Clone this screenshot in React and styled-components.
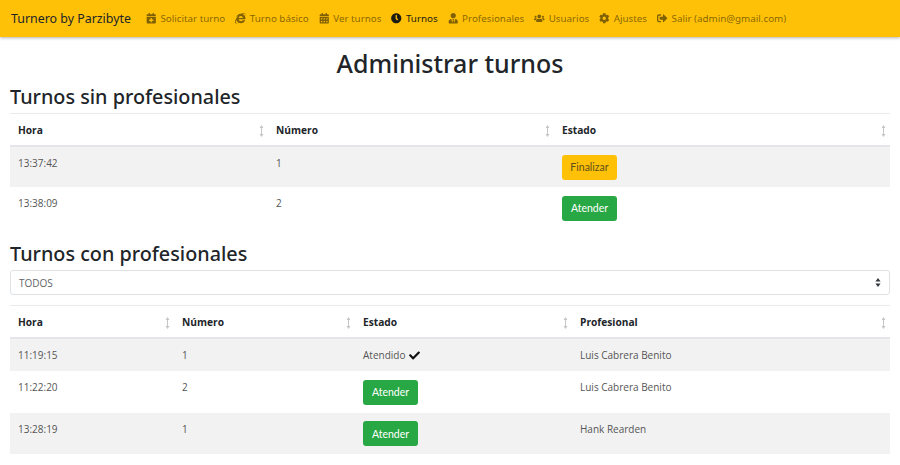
import React from "react";
import styled, { createGlobalStyle } from "styled-components";
import {
  FaCalendarPlus,
  FaInternetExplorer,
  FaCalendarAlt,
  FaClock,
  FaUserTie,
  FaUsers,
  FaCog,
  FaSignOutAlt,
  FaCheck,
} from "react-icons/fa";

const GlobalStyle = createGlobalStyle`
  body {
    margin: 0;
    background: #fff;
    color: #212529;
    font-family: "Noto Sans", "Open Sans", sans-serif;
  }
`;

const Navbar = styled.nav`
  height: 37px;
  background: #ffc107;
  box-shadow: 0 1px 3px rgba(0, 0, 0, 0.3);
  display: flex;
  align-items: center;
  padding: 0 11px;
`;

const Brand = styled.span`
  font-size: 12.4px;
  color: #212529;
  margin-right: 15px;
  white-space: nowrap;
`;

const NavLink = styled.a`
  display: flex;
  align-items: center;
  gap: 4px;
  font-size: 9.8px;
  white-space: nowrap;
  margin-right: 10px;
  color: ${(p) => (p.$active ? "#1b1b12" : "rgba(0, 0, 0, 0.5)")};
  svg {
    font-size: 10.5px;
  }
`;

const Main = styled.main`
  padding: 0 10px;
`;

const Title = styled.h1`
  margin: 10px 0 0;
  font-size: 25px;
  line-height: 32px;
  font-weight: 500;
  text-align: center;
`;

const Subtitle = styled.h2`
  margin: 0;
  font-size: 19.8px;
  line-height: 26px;
  font-weight: 500;
  padding-top: ${(p) => p.$top}px;
`;

const Table = styled.table`
  width: 880px;
  border-collapse: collapse;
  table-layout: fixed;
  font-size: 10px;
  font-family: "Open Sans", "Noto Sans", sans-serif;
  color: #555;
  margin-top: ${(p) => p.$top || 0}px;
`;

const HeadCell = styled.th`
  position: relative;
  height: 31px;
  padding: 0 8px;
  text-align: left;
  font-size: 10.2px;
  font-weight: 700;
  color: #212529;
  border-top: 1px solid #e9ecef;
  border-bottom: 2px solid #e3e5e8;
`;

const SortMark = styled.svg`
  position: absolute;
  right: 4px;
  top: 11px;
  width: 5px;
  height: 12px;
  color: #c4c6c8;
`;

const Row = styled.tr`
  height: ${(p) => p.$height}px;
  background: ${(p) => (p.$striped ? "#f2f2f2" : "#fff")};
`;

const Cell = styled.td`
  padding: ${(p) => (p.$center ? "0 8px" : "9px 8px 0")};
  vertical-align: ${(p) => (p.$center ? "middle" : "top")};
  line-height: 14px;
`;

const Button = styled.button`
  display: block;
  height: 25px;
  width: 55px;
  padding: 0;
  border: 0;
  border-radius: 3px;
  font-family: "Lato", sans-serif;
  font-size: 10.5px;
  background: ${(p) => (p.$kind === "warning" ? "#ffc107" : "#28a745")};
  color: ${(p) => (p.$kind === "warning" ? "#5e4f1a" : "#fff")};
`;

const Select = styled.div`
  height: 23px;
  border: 1px solid #dfe2e5;
  border-radius: 3px;
  display: flex;
  align-items: center;
  justify-content: space-between;
  padding: 0 8px;
  font-size: 10px;
  color: #5f6468;
  font-family: "Open Sans", sans-serif;
  margin-top: 3px;
`;

const Done = styled.span`
  display: inline-flex;
  align-items: center;
  gap: 4px;
  svg {
    color: #111;
    font-size: 11px;
  }
`;

function Sort() {
  return (
    <SortMark viewBox="0 0 5 12">
      <path d="M2.5 0 L4.5 3 H0.5 Z M2.5 12 L4.5 9 H0.5 Z M2 3 h1 v6 h-1 Z" fill="currentColor" />
    </SortMark>
  );
}

function Head({ columns }) {
  return (
    <>
      <colgroup>
        {columns.map((c) => (
          <col key={c.name} width={c.width} />
        ))}
      </colgroup>
      <thead>
        <tr>
          {columns.map((c) => (
            <HeadCell key={c.name}>
              {c.name}
              <Sort />
            </HeadCell>
          ))}
        </tr>
      </thead>
    </>
  );
}

const links = [
  { label: "Solicitar turno", Icon: FaCalendarPlus },
  { label: "Turno básico", Icon: FaInternetExplorer },
  { label: "Ver turnos", Icon: FaCalendarAlt },
  { label: "Turnos", Icon: FaClock, active: true },
  { label: "Profesionales", Icon: FaUserTie },
  { label: "Usuarios", Icon: FaUsers },
  { label: "Ajustes", Icon: FaCog },
  { label: "Salir (admin@gmail.com)", Icon: FaSignOutAlt },
];

export default function App() {
  return (
    <>
      <GlobalStyle />
      <Navbar>
        <Brand>Turnero by Parzibyte</Brand>
        {links.map(({ label, Icon, active }) => (
          <NavLink key={label} $active={active}>
            <Icon />
            {label}
          </NavLink>
        ))}
      </Navbar>
      <Main>
        <Title>Administrar turnos</Title>
        <Subtitle $top={5}>Turnos sin profesionales</Subtitle>
        <Table $top={3}>
          <Head
            columns={[
              { name: "Hora", width: 258 },
              { name: "Número", width: 286 },
              { name: "Estado", width: 336 },
            ]}
          />
          <tbody>
            <Row $striped $height={41}>
              <Cell>13:37:42</Cell>
              <Cell>1</Cell>
              <Cell $center>
                <Button $kind="warning">Finalizar</Button>
              </Cell>
            </Row>
            <Row $height={42}>
              <Cell>13:38:09</Cell>
              <Cell>2</Cell>
              <Cell $center>
                <Button>Atender</Button>
              </Cell>
            </Row>
          </tbody>
        </Table>
        <Subtitle $top={12}>Turnos con profesionales</Subtitle>
        <Select>
          TODOS
          <svg width="6" height="9" viewBox="0 0 6 9">
            <path d="M3 0 L5.6 3.4 H0.4 Z M3 9 L5.6 5.6 H0.4 Z" fill="#343a40" />
          </svg>
        </Select>
        <Table $top={10}>
          <Head
            columns={[
              { name: "Hora", width: 164 },
              { name: "Número", width: 181 },
              { name: "Estado", width: 217 },
              { name: "Profesional", width: 318 },
            ]}
          />
          <tbody>
            <Row $striped $height={33}>
              <Cell>11:19:15</Cell>
              <Cell>1</Cell>
              <Cell>
                <Done>
                  Atendido <FaCheck />
                </Done>
              </Cell>
              <Cell>Luis Cabrera Benito</Cell>
            </Row>
            <Row $height={42}>
              <Cell>11:22:20</Cell>
              <Cell>2</Cell>
              <Cell $center>
                <Button>Atender</Button>
              </Cell>
              <Cell>Luis Cabrera Benito</Cell>
            </Row>
            <Row $striped $height={41}>
              <Cell>13:28:19</Cell>
              <Cell>1</Cell>
              <Cell $center>
                <Button>Atender</Button>
              </Cell>
              <Cell>Hank Rearden</Cell>
            </Row>
          </tbody>
        </Table>
      </Main>
    </>
  );
}
